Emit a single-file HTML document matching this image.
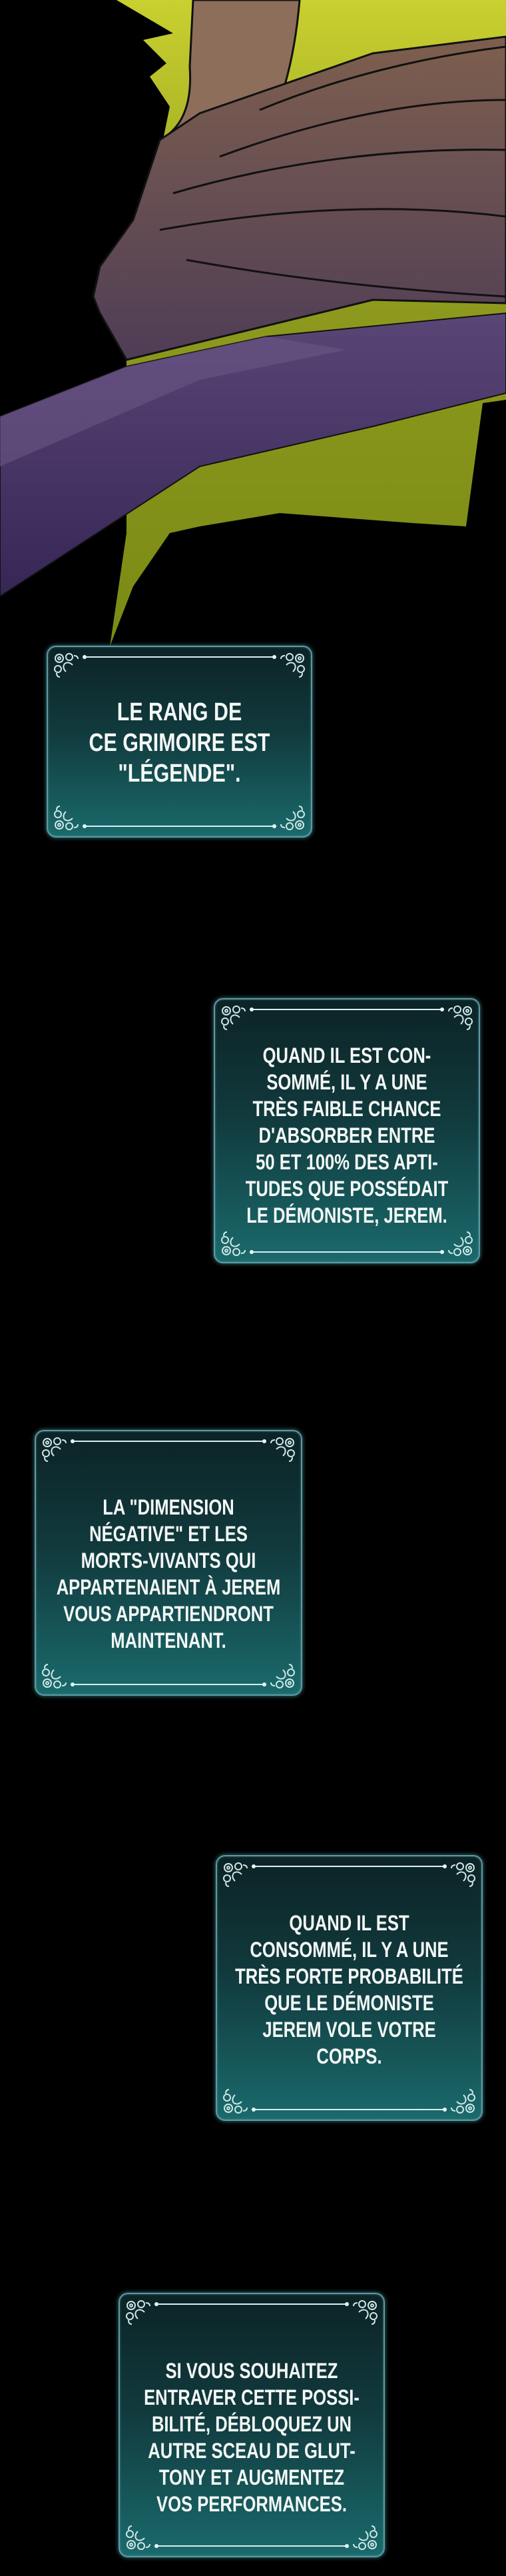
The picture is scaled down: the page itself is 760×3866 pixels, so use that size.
<!DOCTYPE html>
<html><head><meta charset="utf-8"><style>
html,body{margin:0;padding:0;background:#000;}
body{width:760px;height:3866px;position:relative;overflow:hidden;}
.box{position:absolute;box-sizing:border-box;border:2px solid #5c9aa3;border-radius:14px;
background:linear-gradient(180deg,#0c2326 0%,#113a3d 45%,#1a6a6c 100%);
box-shadow:0 0 6px 1px rgba(90,170,180,.55), inset 0 0 3px rgba(140,210,215,.4);}
.box .ln{position:absolute;left:55px;right:55px;height:2px;background:#d8eef0;}
.box .ln:before,.box .ln:after{content:"";position:absolute;top:-2px;width:6px;height:6px;border-radius:3px;background:#e8f6f6;}
.box .ln:before{left:-3px}.box .ln:after{right:-3px}
.box .t{top:14px}.box .b{bottom:14px}
.orn{position:absolute;width:42px;height:42px;}
.tl{left:5px;top:5px}.tr{right:5px;top:5px;transform:scaleX(-1)}
.bl{left:5px;bottom:5px;transform:scaleY(-1)}.br{right:5px;bottom:5px;transform:scale(-1,-1)}
.txt{position:absolute;left:-60px;right:-60px;text-align:center;color:#f4f8f6;font-family:"Liberation Sans",sans-serif;font-weight:bold;white-space:nowrap;transform:scaleX(.8);}
</style></head><body>
<svg width="0" height="0" style="position:absolute">
<defs>
<g id="o" fill="none" stroke="#cfe6e6" stroke-width="2">
<circle cx="12" cy="12" r="6"/><circle cx="12" cy="12" r="2"/>
<circle cx="27" cy="10" r="5"/><circle cx="10" cy="28" r="5"/>
<path d="M20,20 q6,-4 12,2 M20,20 q-4,6 2,12 M34,8 q6,0 6,5 M8,34 q0,6 5,6"/>
</g></defs></svg>
<svg width="760" height="1000" style="position:absolute;left:0;top:0">
<defs>
<linearGradient id="br" x1="0" y1="0" x2="0" y2="1"><stop offset="0" stop-color="#7e5f4e"/><stop offset="1" stop-color="#4f3d56"/></linearGradient>
<linearGradient id="pu" x1="0" y1="0" x2="0" y2="1"><stop offset="0" stop-color="#5a4676"/><stop offset="1" stop-color="#362656"/></linearGradient>
<linearGradient id="yl" x1="0" y1="0" x2="0" y2="1"><stop offset="0" stop-color="#c9d030"/><stop offset="1" stop-color="#8d9a1c"/></linearGradient>
<linearGradient id="yl2" x1="0" y1="0" x2="0" y2="1"><stop offset="0" stop-color="#8e9a1e"/><stop offset="1" stop-color="#7a8a14"/></linearGradient>
</defs>
<polygon points="175,0 760,0 760,430 200,430 255,160 225,115 250,95 215,60 260,50" fill="url(#yl)"/>
<polygon points="190,450 760,440 760,600 725,605 700,790 620,785 420,770 300,790 255,800 200,880 165,970 190,800" fill="url(#yl2)"/>
<path d="M290,0 L450,0 Q440,120 400,200 Q340,260 270,255 Q235,230 255,200 Q290,170 285,100 Z" fill="#8d6e5a" stroke="#111" stroke-width="3"/>
<polygon points="140,445 150,400 200,330 240,210 300,170 560,80 760,55 760,455 560,450 190,540 150,470" fill="url(#br)" stroke="#111" stroke-width="3"/>
<path d="M390,165 Q560,95 760,70 M330,235 Q560,150 760,150 M260,290 Q500,220 760,225 M240,345 Q520,295 760,325 M280,390 Q500,430 760,445" stroke="#111" stroke-width="3" fill="none"/>
<polygon points="0,625 190,550 400,505 760,470 760,590 560,640 300,700 0,895" fill="url(#pu)" stroke="#111" stroke-width="2"/>
<polygon points="0,625 190,550 400,505 520,525 300,570 0,700" fill="#6a5786" opacity=".6"/>
</svg>

<div class="box" style="left:70px;top:969px;width:399px;height:288px">
<div class="ln t"></div><div class="ln b"></div>
<svg class="orn tl"><use href="#o"/></svg><svg class="orn tr"><use href="#o"/></svg><svg class="orn bl"><use href="#o"/></svg><svg class="orn br"><use href="#o"/></svg>
<div class="txt" style="top:75px;font-size:38px;line-height:46px">LE RANG DE<br>CE GRIMOIRE EST<br>"LÉGENDE".</div>
</div>

<div class="box" style="left:321px;top:1498px;width:400px;height:398px">
<div class="ln t"></div><div class="ln b"></div>
<svg class="orn tl"><use href="#o"/></svg><svg class="orn tr"><use href="#o"/></svg><svg class="orn bl"><use href="#o"/></svg><svg class="orn br"><use href="#o"/></svg>
<div class="txt" style="top:64px;font-size:32px;line-height:40px">QUAND IL EST CON-<br>SOMMÉ, IL Y A UNE<br>TRÈS FAIBLE CHANCE<br>D'ABSORBER ENTRE<br>50 ET 100% DES APTI-<br>TUDES QUE POSSÉDAIT<br>LE DÉMONISTE, JEREM.</div>
</div>

<div class="box" style="left:52px;top:2146px;width:402px;height:399px">
<div class="ln t"></div><div class="ln b"></div>
<svg class="orn tl"><use href="#o"/></svg><svg class="orn tr"><use href="#o"/></svg><svg class="orn bl"><use href="#o"/></svg><svg class="orn br"><use href="#o"/></svg>
<div class="txt" style="top:94px;font-size:32px;line-height:40px">LA "DIMENSION<br>NÉGATIVE" ET LES<br>MORTS-VIVANTS QUI<br>APPARTENAIENT À JEREM<br>VOUS APPARTIENDRONT<br>MAINTENANT.</div>
</div>

<div class="box" style="left:324px;top:2784px;width:401px;height:399px">
<div class="ln t"></div><div class="ln b"></div>
<svg class="orn tl"><use href="#o"/></svg><svg class="orn tr"><use href="#o"/></svg><svg class="orn bl"><use href="#o"/></svg><svg class="orn br"><use href="#o"/></svg>
<div class="txt" style="top:80px;font-size:32px;line-height:40px">QUAND IL EST<br>CONSOMMÉ, IL Y A UNE<br>TRÈS FORTE PROBABILITÉ<br>QUE LE DÉMONISTE<br>JEREM VOLE VOTRE<br>CORPS.</div>
</div>

<div class="box" style="left:178px;top:3441px;width:400px;height:397px">
<div class="ln t"></div><div class="ln b"></div>
<svg class="orn tl"><use href="#o"/></svg><svg class="orn tr"><use href="#o"/></svg><svg class="orn bl"><use href="#o"/></svg><svg class="orn br"><use href="#o"/></svg>
<div class="txt" style="top:95px;font-size:32px;line-height:40px">SI VOUS SOUHAITEZ<br>ENTRAVER CETTE POSSI-<br>BILITÉ, DÉBLOQUEZ UN<br>AUTRE SCEAU DE GLUT-<br>TONY ET AUGMENTEZ<br>VOS PERFORMANCES.</div>
</div>
</body></html>
